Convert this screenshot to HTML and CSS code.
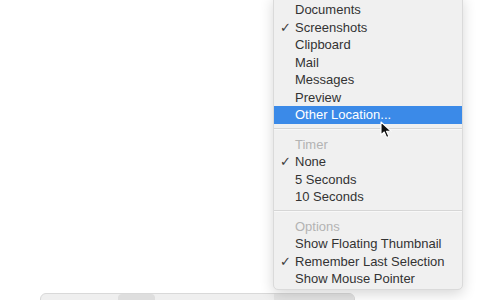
FILE: index.html
```html
<!DOCTYPE html>
<html lang="en">
<head>
    <meta charset="UTF-8">
    <title>Screenshot Options</title>
    <link rel="stylesheet" href="styles.css">
</head>
<body>
    <!-- Toolbar at the bottom -->
    <div class="toolbar">
        <div class="tool-gap"></div>
        <div class="tool-btn"></div>
        <div class="tool-gap wide"></div>
        <div class="tool-btn options"></div>
    </div>

    <!-- Options menu -->
    <div class="menu">
        <ul>
            <li class="item">Documents</li>
            <li class="item checked">Screenshots</li>
            <li class="item">Clipboard</li>
            <li class="item">Mail</li>
            <li class="item">Messages</li>
            <li class="item">Preview</li>
            <li class="item active">Other Location...</li>
        </ul>
        <div class="separator"></div>
        <ul>
            <li class="item header">Timer</li>
            <li class="item checked">None</li>
            <li class="item">5 Seconds</li>
            <li class="item">10 Seconds</li>
        </ul>
        <div class="separator"></div>
        <ul>
            <li class="item header">Options</li>
            <li class="item">Show Floating Thumbnail</li>
            <li class="item checked">Remember Last Selection</li>
            <li class="item">Show Mouse Pointer</li>
        </ul>
    </div>

    <!-- Mouse cursor -->
    <svg class="cursor" width="14" height="18" viewBox="0 0 14 18">
        <path d="M1 1 L1 14 L4.2 11 L6.6 16.4 L8.8 15.4 L6.5 10.2 L11 10.2 Z" fill="#111" stroke="#fff" stroke-width="1.1" stroke-linejoin="round"/>
    </svg>
</body>
</html>
```

FILE: styles.css
```css
body {
    margin: 0;
    width: 480px;
    height: 300px;
    background: #fff;
    font-family: "Liberation Sans", Arial, sans-serif;
    position: relative;
    overflow: hidden;
}

.toolbar {
    position: absolute;
    left: 40px;
    top: 293px;
    width: 315px;
    height: 20px;
    display: flex;
    background: #efefef;
    border: 1px solid #d9d9d9;
    border-radius: 6px;
    box-sizing: border-box;
}

.tool-gap {
    width: 77px;
}

.tool-gap.wide {
    width: 120px;
}

.tool-btn {
    width: 37px;
    background: #dedede;
    border-radius: 4px 4px 0 0;
}

.tool-btn.options {
    width: 80px;
    background: #e3e3e3;
    border-radius: 0 5px 0 0;
}

.menu {
    position: absolute;
    left: 273px;
    top: -5px;
    width: 190px;
    padding: 5px 0 1px;
    background: #f0f0f0;
    border: 1px solid #dadada;
    border-radius: 5px;
    box-shadow: 0 4px 14px rgba(0, 0, 0, 0.16);
    box-sizing: border-box;
}

.menu ul {
    list-style-type: none;
    margin: 0;
    padding: 0;
}

.item {
    position: relative;
    height: 17.5px;
    line-height: 17.5px;
    padding-left: 21px;
    font-size: 13px;
    color: #333;
    white-space: nowrap;
}

.item.checked::before {
    content: "\2713";
    position: absolute;
    left: 6px;
    font-size: 13px;
    color: #3c3c3c;
}

.item.header {
    color: #b3b3b3;
}

.item.active {
    background: #3b8ae8;
    color: #fff;
}

.separator {
    height: 1px;
    margin: 4.5px 0 5.5px;
    background: #d6d6d6;
    border-bottom: 1px solid #f8f8f8;
}

.cursor {
    position: absolute;
    left: 380px;
    top: 121px;
}
```
